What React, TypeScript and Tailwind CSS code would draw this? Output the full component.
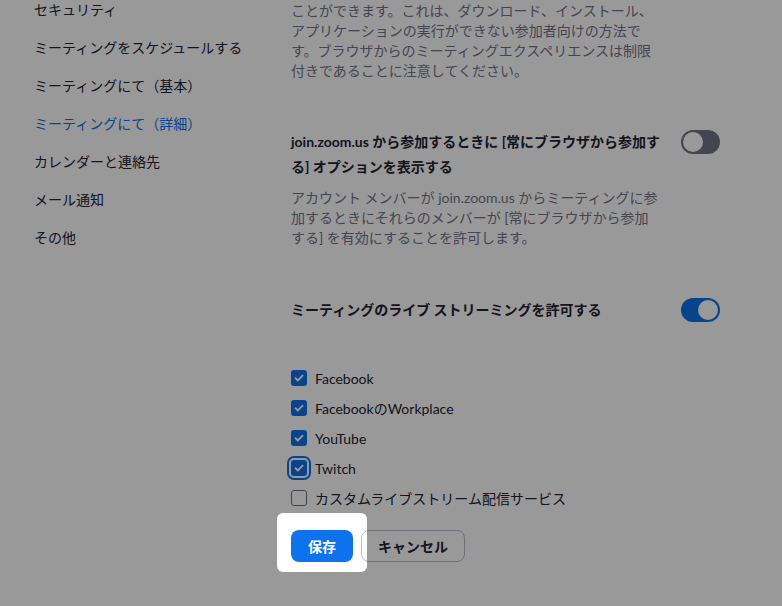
const font = { fontFamily: 'Lato, "Noto Sans CJK JP", sans-serif' };

const navItems = [
  'セキュリティ',
  'ミーティングをスケジュールする',
  'ミーティングにて（基本）',
  'ミーティングにて（詳細）',
  'カレンダーと連絡先',
  'メール通知',
  'その他',
];

const streams = [
  { label: 'Facebook', checked: true },
  { label: 'FacebookのWorkplace', checked: true },
  { label: 'YouTube', checked: true },
  { label: 'Twitch', checked: true, focused: true },
  { label: 'カスタムライブストリーム配信サービス', checked: false },
];

function Toggle({ on }: { on: boolean }) {
  return (
    <div
      className={`relative w-[39px] h-[24px] rounded-full shrink-0 ${on ? 'bg-[#0e72ed]' : 'bg-[#747487]'}`}
    >
      <div
        className={`absolute top-[2px] w-[20px] h-[20px] rounded-full bg-white ${on ? 'right-[2px]' : 'left-[2px]'}`}
      />
    </div>
  );
}

function Checkbox({ checked, focused }: { checked: boolean; focused?: boolean }) {
  return (
    <div
      className={`w-4 h-4 rounded-[3px] flex items-center justify-center shrink-0 ${
        checked ? 'bg-[#0e72ed]' : 'border border-[#6e7081] bg-white'
      } ${focused ? 'outline-2 outline-offset-2 outline-[#0e72ed]' : ''}`}
    >
      {checked && (
        <svg width="12" height="12" viewBox="0 0 12 12" fill="none">
          <path d="M2.5 6.2l2.3 2.3L9.6 3.6" stroke="white" strokeWidth="1.8" strokeLinecap="round" strokeLinejoin="round" />
        </svg>
      )}
    </div>
  );
}

export default function App() {
  return (
    <div className="relative h-[606px] overflow-hidden bg-white text-[14px] text-[#232333]" style={font}>
      <div className="flex">
        {/* settings nav */}
        <nav className="w-[291px] shrink-0 pl-[34px] flex flex-col gap-[18px]">
          {navItems.map((item, i) => (
            <div key={item} className={`leading-5 ${i === 3 ? 'text-[#0e72ed]' : ''}`}>
              {item}
            </div>
          ))}
        </nav>

        <main className="w-[429px] pt-[1px]">
          <p className="w-[370px] leading-5 text-[#747487]">
            ことができます。これは、ダウンロード、インストール、アプリケーションの実行ができない参加者向けの方法です。ブラウザからのミーティングエクスペリエンスは制限付きであることに注意してください。
          </p>

          <div className="mt-[48px] flex justify-between items-start">
            <div className="w-[372px]">
              <div className="font-bold leading-[25px]">
                join.zoom.us から参加するときに [常にブラウザから参加する] オプションを表示する
              </div>
              <p className="mt-[9px] leading-5 text-[#747487]">
                アカウント メンバーが join.zoom.us からミーティングに参加するときにそれらのメンバーが [常にブラウザから参加
                <br />
                する] を有効にすることを許可します。
              </p>
            </div>
            <div className="mt-[1px]">
              <Toggle on={false} />
            </div>
          </div>

          <div className="mt-[49px] flex justify-between items-start">
            <div className="font-bold leading-[25px]">ミーティングのライブ ストリーミングを許可する</div>
            <div className="mt-[1px]">
              <Toggle on />
            </div>
          </div>

          <div className="mt-[41px] flex flex-col">
            {streams.map((s) => (
              <label key={s.label} className="h-[30px] flex items-center gap-2">
                <Checkbox checked={s.checked} focused={s.focused} />
                <span>{s.label}</span>
              </label>
            ))}
          </div>

          <div className="mt-[17px] flex gap-2">
            <span className="relative">
              <button className="h-8 px-[17px] rounded-lg bg-[#0e72ed] text-white font-bold">保存</button>
              {/* tour spotlight: dims everything except the save button */}
              <div className="absolute -left-[14px] -right-[14px] -top-[17px] -bottom-[10px] rounded-md z-10 pointer-events-none shadow-[0_0_0_2000px_rgba(0,0,0,0.4)]" />
            </span>
            <button className="h-8 px-4 rounded-lg border border-[#babacc] bg-white font-bold">キャンセル</button>
          </div>
        </main>
      </div>
    </div>
  );
}
